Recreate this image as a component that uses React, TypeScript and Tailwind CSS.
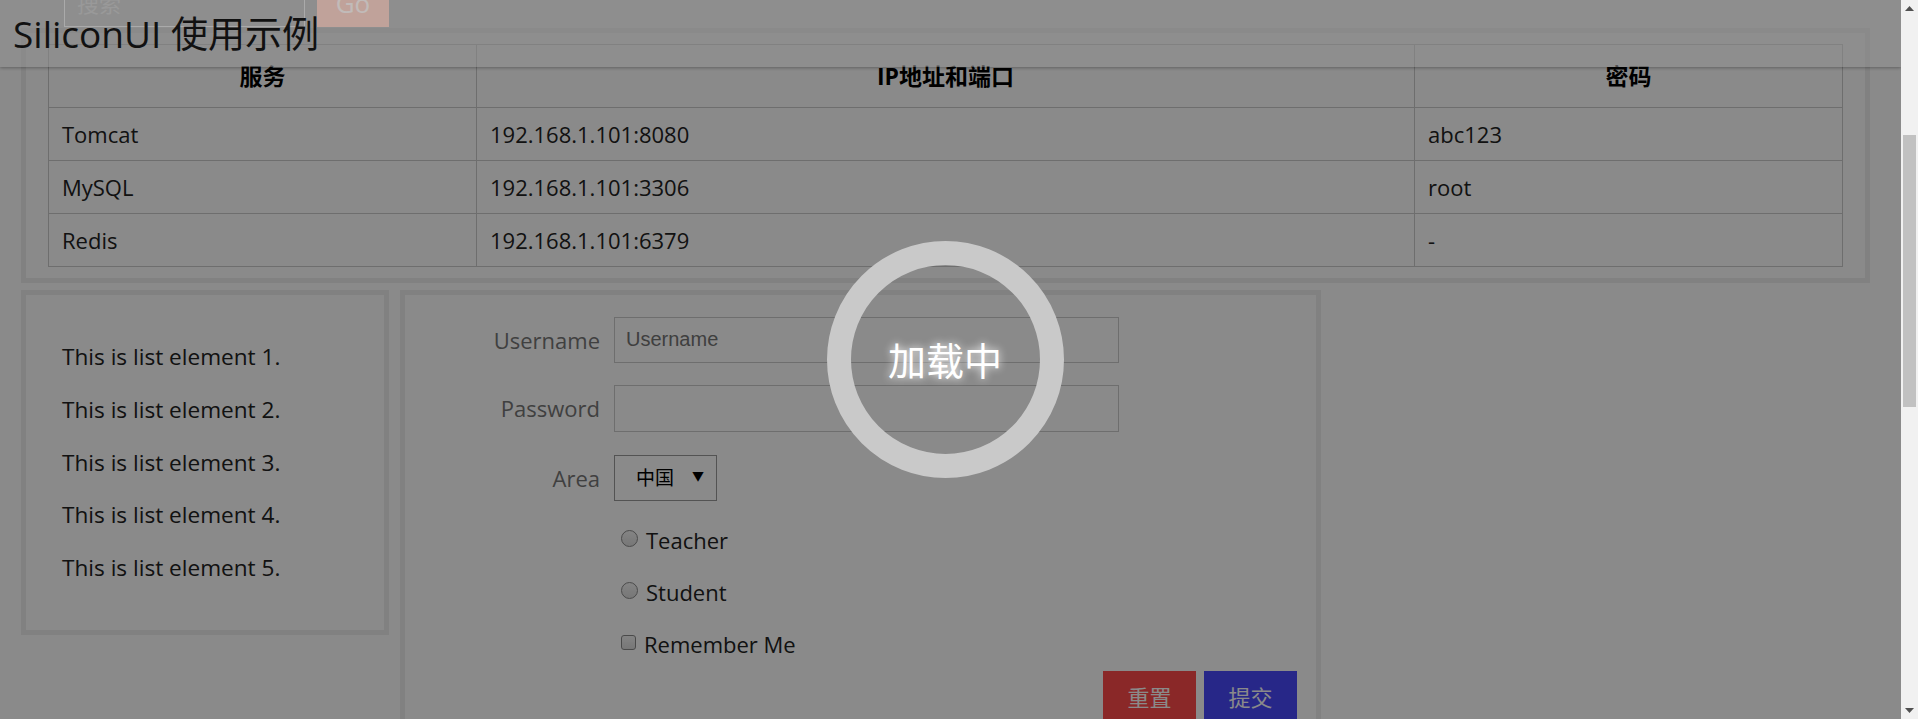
import React from "react";

const rows = [
  ["Tomcat", "192.168.1.101:8080", "abc123"],
  ["MySQL", "192.168.1.101:3306", "root"],
  ["Redis", "192.168.1.101:6379", "-"],
];

export default function App() {
  return (
    <div className="flex h-[719px] w-[1918px] overflow-hidden bg-white font-['Open_Sans','Noto_Sans_CJK_SC',sans-serif] text-[#222]">
      <div className="relative h-full flex-1 overflow-hidden">
        <div className="-mt-[21px]">
          {/* search row (scrolled under header) */}
          <div className="relative z-[15] flex h-[48px] items-stretch gap-[12px] pl-[64px]">
            <div className="flex w-[241px] items-center border border-[#c8c8c8] pl-[12px] text-[22px] text-[#a2a2a2]">
              搜索
            </div>
            <div className="flex w-[72px] items-center justify-center bg-[#f8b6a4] text-[26px] text-[#fbeee9]">
              Go
            </div>
          </div>

          {/* table panel */}
          <div className="ml-[21px] mt-[1px] w-[1849px] border-[5px] border-[#eee] px-[22px] pb-[11px] pt-[11px]">
            <table className="w-full border-collapse text-[22px]">
              <thead>
                <tr className="h-[63px]">
                  <th className="w-[428px] border border-[#ccc] text-center text-[23px] font-bold text-black">服务</th>
                  <th className="w-[938px] border border-[#ccc] text-center text-[23px] font-bold text-black">IP地址和端口</th>
                  <th className="border border-[#ccc] text-center text-[23px] font-bold text-black">密码</th>
                </tr>
              </thead>
              <tbody>
                {rows.map((r) => (
                  <tr key={r[0]} className="h-[53px]">
                    {r.map((c, i) => (
                      <td key={i} className="border border-[#ccc] px-[13px]">
                        {c}
                      </td>
                    ))}
                  </tr>
                ))}
              </tbody>
            </table>
          </div>

          {/* bottom row */}
          <div className="mt-[7px] flex items-start gap-[11px] pl-[21px]">
            <div className="h-[345px] w-[368px] border-[5px] border-[#eee] pl-[36px] pt-[36px] text-[22.6px]">
              <ul>
                {[1, 2, 3, 4, 5].map((n) => (
                  <li key={n} className="flex h-[52.6px] items-center">
                    This is list element {n}.
                  </li>
                ))}
              </ul>
            </div>

            <div className="h-[500px] w-[921px] border-[5px] border-[#eee] pt-[22px]">
              <div className="flex h-[46px] items-center">
                <label className="w-[195px] text-right text-[22px] text-[#777]">Username</label>
                <input
                  readOnly
                  placeholder="Username"
                  className="ml-[14px] h-[46px] w-[505px] border border-[#ccc] bg-transparent px-[11px] pb-[2px] font-['Liberation_Sans',sans-serif] text-[20px] outline-none placeholder:text-[#757575]"
                />
              </div>
              <div className="mt-[22px] flex h-[47px] items-center">
                <label className="w-[195px] text-right text-[22px] text-[#777]">Password</label>
                <input
                  readOnly
                  type="password"
                  className="ml-[14px] h-[47px] w-[505px] border border-[#ccc] bg-transparent px-[11px] outline-none"
                />
              </div>
              <div className="mt-[23px] flex h-[46px] items-center">
                <label className="w-[195px] text-right text-[22px] text-[#777]">Area</label>
                <div className="ml-[14px] flex h-[46px] w-[103px] items-center border border-[#999] pl-[21px] pr-[12px]">
                  <span className="text-[19px] text-black">中国</span>
                  <span className="ml-auto mb-[3px] text-[12px] text-black">▼</span>
                </div>
              </div>

              <div className="mt-[13px]">
                {["Teacher", "Student"].map((t) => (
                  <div key={t} className="flex h-[52px] items-center gap-[8px] pl-[216px] text-[22px]">
                    <span className="mb-[4px] h-[17px] w-[17px] rounded-full border border-[#8a8a8a] bg-gradient-to-b from-[#f4f4f4] to-[#dcdcdc]" />
                    <span>{t}</span>
                  </div>
                ))}
                <div className="flex h-[52px] items-center gap-[8px] pl-[216px] text-[22px]">
                  <span className="mb-[4px] h-[15px] w-[15px] rounded-[3px] border border-[#8a8a8a] bg-gradient-to-b from-[#f4f4f4] to-[#dcdcdc]" />
                  <span>Remember Me</span>
                </div>
              </div>

              <div className="mt-[1px] flex justify-end gap-[8px] pr-[19px]">
                <button className="h-[56px] w-[93px] pb-[4px] text-[22px] text-white bg-[#ff4a4a]">重置</button>
                <button className="h-[56px] w-[93px] pb-[4px] text-[22px] text-white bg-[#4848fc]">提交</button>
              </div>
            </div>
          </div>
        </div>

        {/* loading overlay */}
        <div className="absolute inset-0 z-10 flex items-center justify-center bg-black/[0.46] pr-[11px]">
          <div className="flex h-[237px] w-[237px] items-center justify-center rounded-full border-[24px] border-[#c9c9c9]">
            <span className="mt-[2px] text-[38px] text-white [text-shadow:0_0_8px_#fff]">加载中</span>
          </div>
        </div>

        {/* fixed header */}
        <div className="absolute inset-x-0 top-0 z-20 flex h-[67px] items-center bg-[rgba(146,146,146,0.55)] pl-[13px] text-[37px] text-[#111] shadow-[0_1px_3px_rgba(0,0,0,0.3)]">
          SiliconUI 使用示例
        </div>
      </div>

      {/* scrollbar */}
      <div className="flex h-full w-[17px] flex-col bg-[#f1f1f1]">
        <div className="flex h-[17px] items-center justify-center">
          <svg width="9" height="5" viewBox="0 0 9 5">
            <polygon points="0,5 9,5 4.5,0" fill="#505050" />
          </svg>
        </div>
        <div className="h-[118px]" />
        <div className="mx-[2px] h-[272px] bg-[#c1c1c1]" />
        <div className="flex-1" />
        <div className="flex h-[17px] items-center justify-center">
          <svg width="9" height="5" viewBox="0 0 9 5">
            <polygon points="0,0 9,0 4.5,5" fill="#505050" />
          </svg>
        </div>
      </div>
    </div>
  );
}
